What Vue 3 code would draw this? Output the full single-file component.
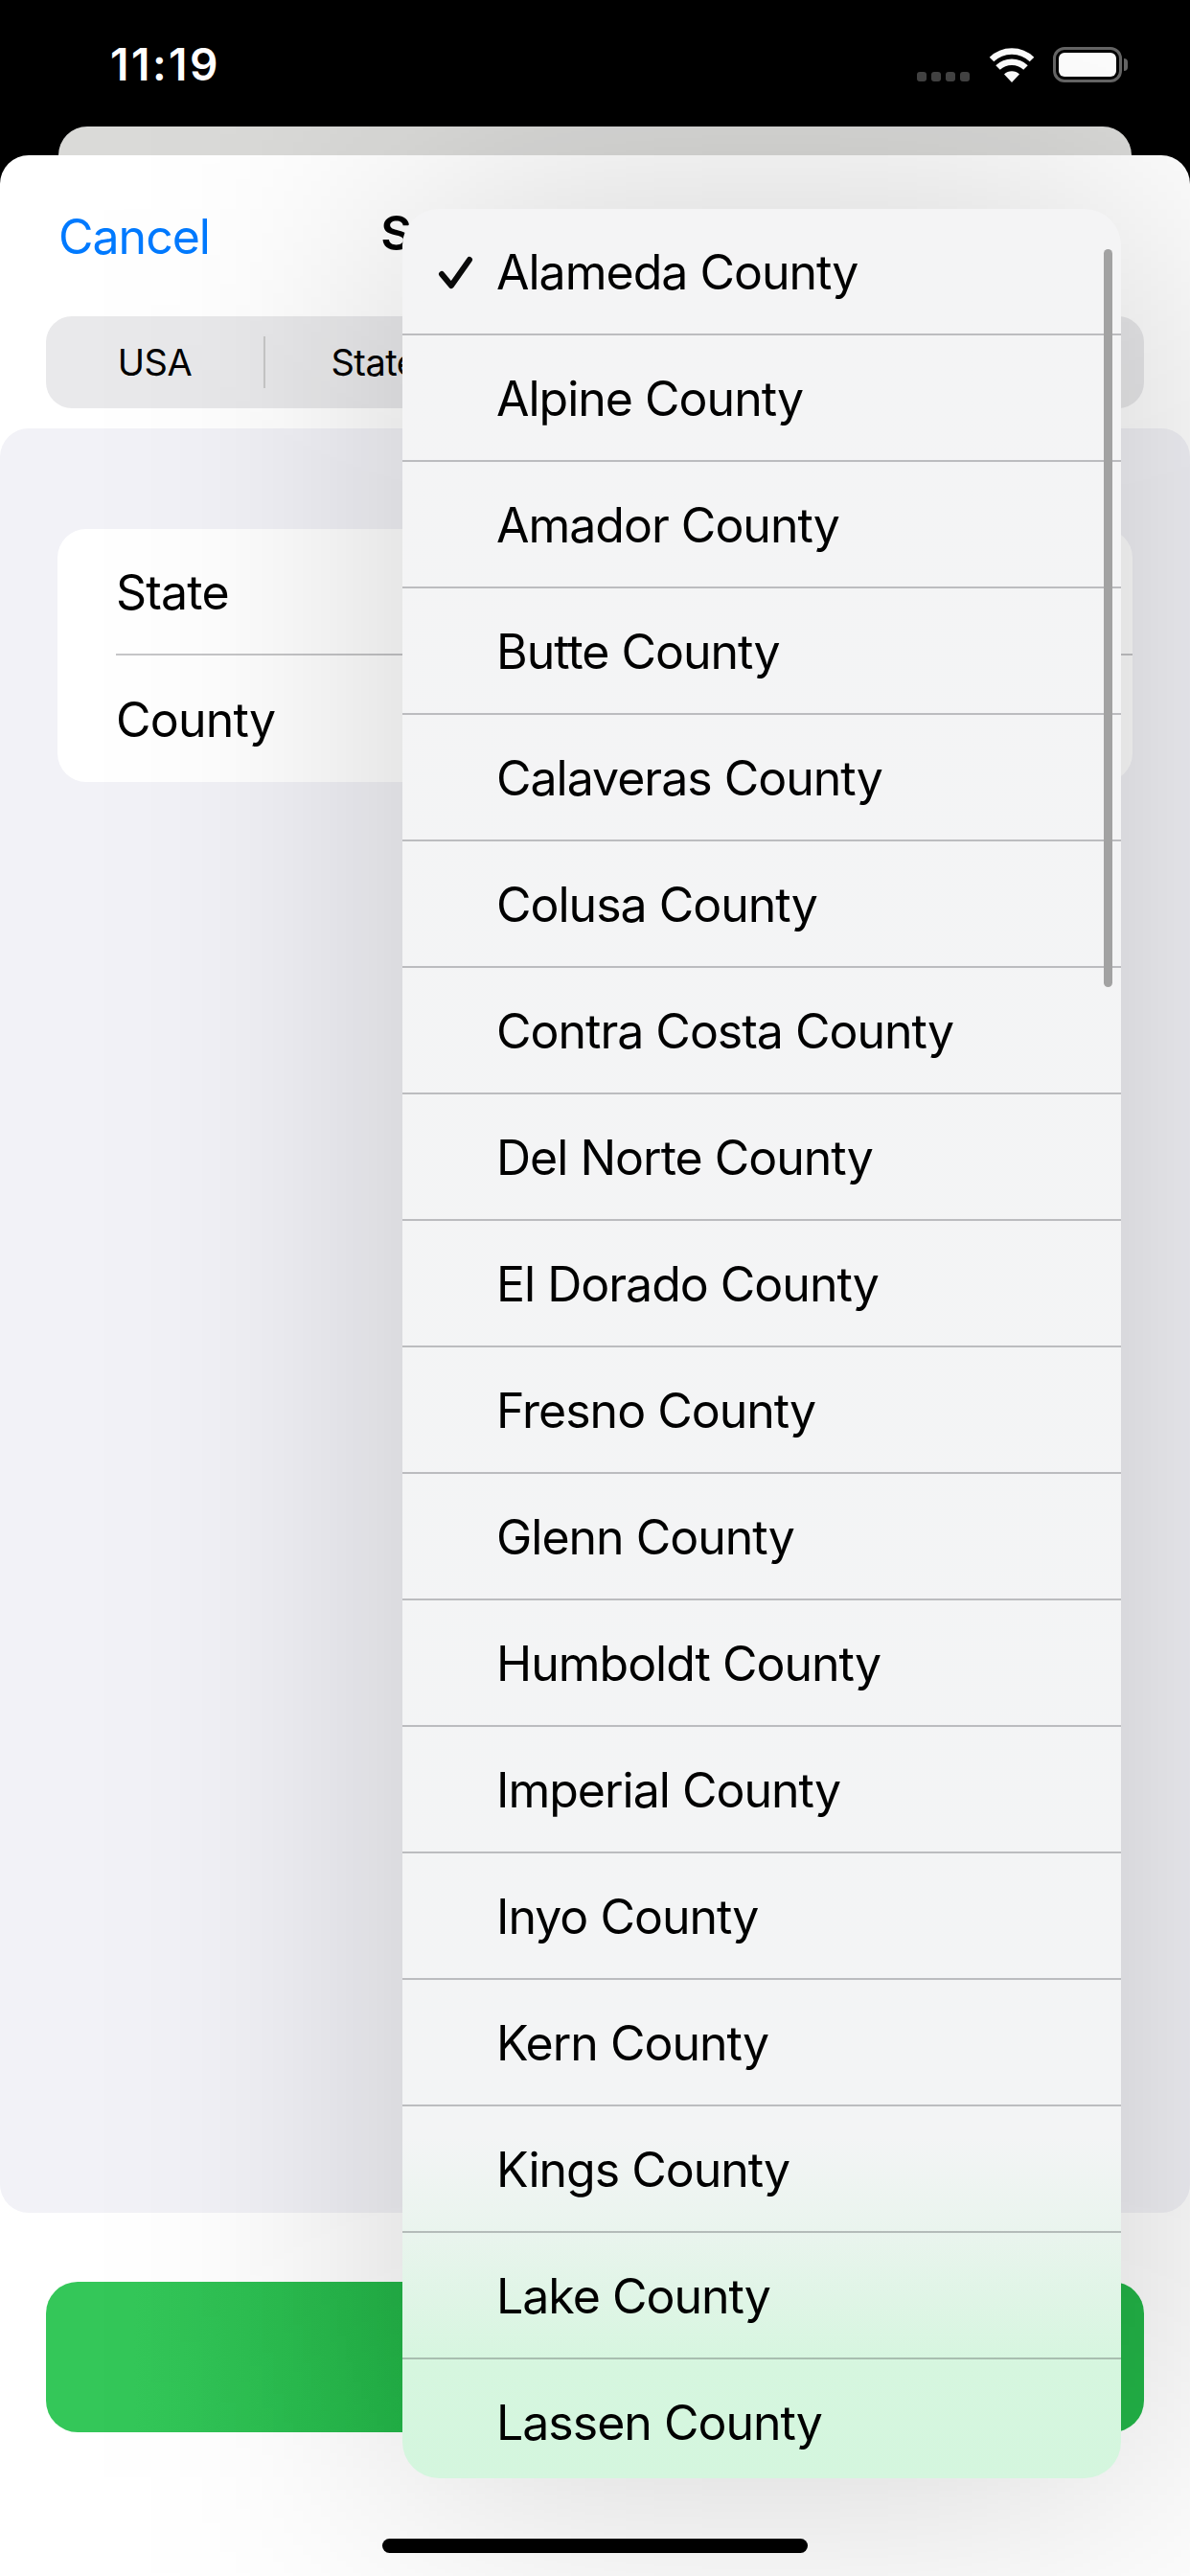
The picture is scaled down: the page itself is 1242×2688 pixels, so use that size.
<template>
	<div class="screen">
		<div class="status-bar">
			<span class="time">11:19</span>
			<div class="status-icons">
				<div class="signal">
					<i v-for="n in 4" :key="n"></i>
				</div>
				<svg class="wifi" width="48" height="37" viewBox="0 0 48 37">
					<path d="M24 37 L16 28.5 A11.5 11.5 0 0 1 32 28.5 Z" fill="#fff" />
					<path d="M9.5 21.5 A21 21 0 0 1 38.5 21.5" fill="none" stroke="#fff" stroke-width="6.5" />
					<path d="M3 13 A30 30 0 0 1 45 13" fill="none" stroke="#fff" stroke-width="6.5" />
				</svg>
				<div class="battery">
					<div class="battery-level"></div>
				</div>
			</div>
		</div>

		<div class="back-sheet"></div>

		<div class="sheet">
			<div class="nav">
				<span class="cancel">Cancel</span>
				<span class="title">Select Geography</span>
			</div>

			<div class="segments">
				<div v-for="seg in segments" :key="seg" class="segment">{{ seg }}</div>
			</div>

			<div class="content">
				<div class="card">
					<div class="card-row">State</div>
					<div class="card-row">County</div>
				</div>
			</div>

			<button class="done">Done</button>
		</div>

		<div class="menu-shadow"></div>

		<div class="menu">
			<div
				v-for="(county, i) in counties"
				:key="county"
				class="menu-row"
			>
				<svg v-if="i === 0" class="check" width="40" height="38" viewBox="0 0 40 38">
					<path d="M5 20 L15 32 L34 5" fill="none" stroke="#0a0a0a" stroke-width="6" stroke-linecap="round" stroke-linejoin="round" />
				</svg>
				<span>{{ county }}</span>
			</div>
			<div class="scrollbar"></div>
		</div>

		<div class="home-bar"></div>
	</div>
</template>

<script setup>
const segments = ['USA', 'State', 'County', 'City', 'Zip']

const counties = [
	'Alameda County',
	'Alpine County',
	'Amador County',
	'Butte County',
	'Calaveras County',
	'Colusa County',
	'Contra Costa County',
	'Del Norte County',
	'El Dorado County',
	'Fresno County',
	'Glenn County',
	'Humboldt County',
	'Imperial County',
	'Inyo County',
	'Kern County',
	'Kings County',
	'Lake County',
	'Lassen County'
]
</script>

<style scoped>
.screen {
	position: relative;
	width: 1242px;
	height: 2688px;
	overflow: hidden;
	background: #000;
	font-family: Inter, "Liberation Sans", sans-serif;
	color: #000;
	display: flex;
	flex-direction: column;
}

.status-bar {
	height: 132px;
	flex: none;
	display: flex;
	justify-content: space-between;
	padding: 49px 71px 0 115px;
	box-sizing: border-box;
}

.time {
	color: #fff;
	font-size: 46px;
	font-weight: 600;
	line-height: 37px;
	letter-spacing: 2.5px;
}

.status-icons {
	display: flex;
	align-items: flex-start;
}

.signal {
	display: flex;
	gap: 5px;
	margin-top: 26px;
}

.signal i {
	width: 10px;
	height: 10px;
	border-radius: 3px;
	background: #444;
}

.wifi {
	margin-left: 20px;
}

.battery {
	position: relative;
	margin-left: 19px;
	width: 72px;
	height: 37px;
	box-sizing: border-box;
	border: 3px solid #666;
	border-radius: 12px;
	padding: 3px;
}

.battery::after {
	content: "";
	position: absolute;
	right: -9px;
	top: 9px;
	width: 4px;
	height: 13px;
	border-radius: 0 4px 4px 0;
	background: #666;
}

.battery-level {
	width: 100%;
	height: 100%;
	border-radius: 6px;
	background: #fff;
}

.back-sheet {
	height: 30px;
	flex: none;
	margin: 0 61px;
	border-radius: 30px 30px 0 0;
	background: #dadad8;
}

.sheet {
	flex: 1;
	display: flex;
	flex-direction: column;
	border-radius: 30px 30px 0 0;
	background: #fff;
}

.nav {
	position: relative;
	height: 168px;
	flex: none;
	display: flex;
	align-items: center;
	justify-content: center;
	padding-bottom: 6px;
	box-sizing: border-box;
}

.cancel {
	position: absolute;
	left: 61px;
	top: 55px;
	color: #007aff;
	font-size: 50px;
	letter-spacing: -1px;
}

.title {
	font-size: 50px;
	font-weight: 600;
	letter-spacing: 1px;
}

.segments {
	height: 96px;
	flex: none;
	margin: 0 48px;
	display: flex;
	align-items: center;
	border-radius: 27px;
	background: #e9e9eb;
}

.segment {
	flex: none;
	width: 227px;
	text-align: center;
	font-size: 38px;
	letter-spacing: -0.5px;
	line-height: 54px;
	border-left: 2px solid #c8c8c8;
}

.segment:first-child {
	border-left: none;
}

.content {
	height: 1862px;
	flex: none;
	margin-top: 21px;
	padding: 105px 60px 0;
	box-sizing: border-box;
	border-radius: 30px;
	background: #f2f2f7;
}

.card {
	border-radius: 30px;
	background: #fff;
	padding-left: 61px;
}

.card-row {
	height: 132px;
	display: flex;
	align-items: center;
	padding-top: 2px;
	font-size: 50px;
	letter-spacing: -0.8px;
	box-sizing: border-box;
}

.card-row:first-child {
	border-bottom: 2px solid #c6c6c8;
}

.done {
	height: 157px;
	flex: none;
	margin: 72px 48px 0;
	border: none;
	border-radius: 33px;
	background: linear-gradient(90deg, #34c759 8%, #23b648 33%);
	color: #fff;
	font-family: inherit;
	font-size: 50px;
	font-weight: 600;
}

.menu-shadow {
	position: absolute;
	left: 420px;
	top: 218px;
	width: 770px;
	height: 2368px;
	background: rgba(0, 0, 0, 0.19);
	filter: blur(150px);
}

.menu {
	position: absolute;
	left: 420px;
	top: 218px;
	width: 750px;
	height: 2368px;
	overflow: hidden;
	border-radius: 38px;
	background: linear-gradient(180deg, #f4f4f5 0%, #f3f4f5 85%, #eaf4ee 89%, #d6f6df 95%, #d4f6de 100%);
}

.menu-row {
	height: 132px;
	box-sizing: border-box;
	display: flex;
	align-items: center;
	padding: 2px 0 0 98px;
	font-size: 50px;
	letter-spacing: -1px;
	border-bottom: 2px solid rgba(60, 60, 67, 0.3);
}

.check {
	position: absolute;
	left: 36px;
	top: 48px;
}

.scrollbar {
	position: absolute;
	left: 732px;
	top: 42px;
	width: 9px;
	height: 770px;
	border-radius: 5px;
	background: #a2a2a2;
}

.home-bar {
	position: absolute;
	left: 399px;
	top: 2649px;
	width: 444px;
	height: 15px;
	border-radius: 8px;
	background: #000;
}
</style>
